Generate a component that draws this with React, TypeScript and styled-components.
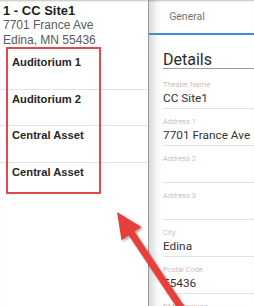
import styled, { createGlobalStyle } from 'styled-components';

const GlobalStyle = createGlobalStyle`
  html, body {
    margin: 0;
    padding: 0;
    background: #ffffff;
  }
  body {
    font-family: "Liberation Sans", Arial, sans-serif;
  }
`;

const Page = styled.div`
  position: relative;
  display: flex;
  width: 254px;
  height: 306px;
  overflow: hidden;
  background: #ffffff;
  box-shadow: inset 0 2px 2px -1px rgba(0, 0, 0, 0.25);
`;

const Sidebar = styled.aside`
  display: flex;
  flex-direction: column;
  width: 148px;
  flex-shrink: 0;
`;

const SiteHeader = styled.div`
  display: flex;
  flex-direction: column;
  padding: 3px 0 0 3px;
  height: 53px;
  box-sizing: border-box;
  flex-shrink: 0;
`;

const SiteTitle = styled.div`
  font-weight: 700;
  font-size: 13px;
  line-height: 15px;
  color: #1e1e1e;
`;

const SiteLine = styled.div`
  font-size: 12px;
  line-height: 15px;
  color: #5a5a5a;
`;

const RoomList = styled.ul`
  list-style: none;
  margin: 0;
  padding: 0;
`;

const RoomRow = styled.li`
  height: 36.5px;
  box-sizing: border-box;
  padding: 2px 0 0 12px;
  font-weight: 700;
  font-size: 11.2px;
  line-height: 14px;
  color: #262626;
  border-bottom: 1px solid #e4e4e4;

  &:last-child {
    border-bottom: none;
  }
`;

const Main = styled.main`
  flex: 1;
  min-width: 0;
  display: flex;
  flex-direction: column;
  border-left: 1px solid #9a9a9a;
  box-shadow: inset 12px 0 10px -8px rgba(0, 0, 0, 0.18);
  font-family: Roboto, "Liberation Sans", sans-serif;
`;

const Tabs = styled.div`
  display: flex;
  flex-shrink: 0;
  height: 33px;
  border-bottom: 2px solid #3b8ddb;
`;

const Tab = styled.div`
  width: 76px;
  display: flex;
  align-items: center;
  justify-content: center;
  font-size: 10.5px;
  color: #727272;
`;

const Body = styled.div`
  display: flex;
  flex-direction: column;
  flex-shrink: 0;
  padding: 17px 0 0 14px;
`;

const SectionTitle = styled.h2`
  margin: 0;
  font-weight: 400;
  font-size: 16px;
  line-height: 16px;
  color: #2a2a2a;
  border-bottom: 1px solid #9c9c9c;
  padding-bottom: 0;
`;

const FieldList = styled.div`
  display: flex;
  flex-direction: column;
  padding-top: 3px;
`;

const Field = styled.div`
  display: flex;
  flex-direction: column;
  flex-shrink: 0;
  height: 37px;
  box-sizing: border-box;
  padding-top: 8px;
  border-bottom: 1px solid #e2e2e2;
`;

const FieldLabel = styled.div`
  font-size: 7.5px;
  font-weight: 300;
  line-height: 10px;
  color: #a8a8a8;
  white-space: nowrap;
`;

const FieldValue = styled.div`
  font-size: 11.8px;
  line-height: 17px;
  color: #333333;
  white-space: nowrap;
  overflow: hidden;
`;

const Highlight = styled.div`
  position: absolute;
  left: 6px;
  top: 47px;
  width: 95px;
  height: 147px;
  box-sizing: border-box;
  border: 2px solid #e14a4a;
  pointer-events: none;
`;

const Arrow = styled.svg`
  position: absolute;
  left: 0;
  top: 0;
  pointer-events: none;
`;

const rooms = ['Auditorium 1', 'Auditorium 2', 'Central Asset', 'Central Asset'];

const fields = [
  { label: 'Theater Name', value: 'CC Site1' },
  { label: 'Address 1', value: '7701 France Ave' },
  { label: 'Address 2', value: '' },
  { label: 'Address 3', value: '' },
  { label: 'City', value: 'Edina' },
  { label: 'Postal Code', value: '55436' },
  { label: 'DMA Ranking', value: '' },
];

export default function App() {
  return (
    <>
      <GlobalStyle />
      <Page>
        <Sidebar>
          <SiteHeader>
            <SiteTitle>1 - CC Site1</SiteTitle>
            <SiteLine>7701 France Ave</SiteLine>
            <SiteLine>Edina, MN 55436</SiteLine>
          </SiteHeader>
          <RoomList>
            {rooms.map((r, i) => (
              <RoomRow key={i}>{r}</RoomRow>
            ))}
          </RoomList>
        </Sidebar>
        <Main>
          <Tabs>
            <Tab>General</Tab>
          </Tabs>
          <Body>
            <SectionTitle>Details</SectionTitle>
            <FieldList>
              {fields.map(f => (
                <Field key={f.label}>
                  <FieldLabel>{f.label}</FieldLabel>
                  <FieldValue>{f.value || '\u00a0'}</FieldValue>
                </Field>
              ))}
            </FieldList>
          </Body>
        </Main>
        <Highlight />
        <Arrow width="254" height="306" viewBox="0 0 254 306">
          <defs>
            <filter id="arrowShadow" x="-20%" y="-20%" width="140%" height="140%">
              <feDropShadow dx="1.5" dy="1.5" stdDeviation="1.2" floodColor="#000" floodOpacity="0.35" />
            </filter>
          </defs>
          <g filter="url(#arrowShadow)" fill="#e5413b">
            <path d="M132.9 229.05 L127.1 232.95 L179.1 310.95 L184.9 307.05 Z" />
            <path d="M117 212 L141.5 226.9 L121.5 240.3 Z" />
          </g>
        </Arrow>
      </Page>
    </>
  );
}
